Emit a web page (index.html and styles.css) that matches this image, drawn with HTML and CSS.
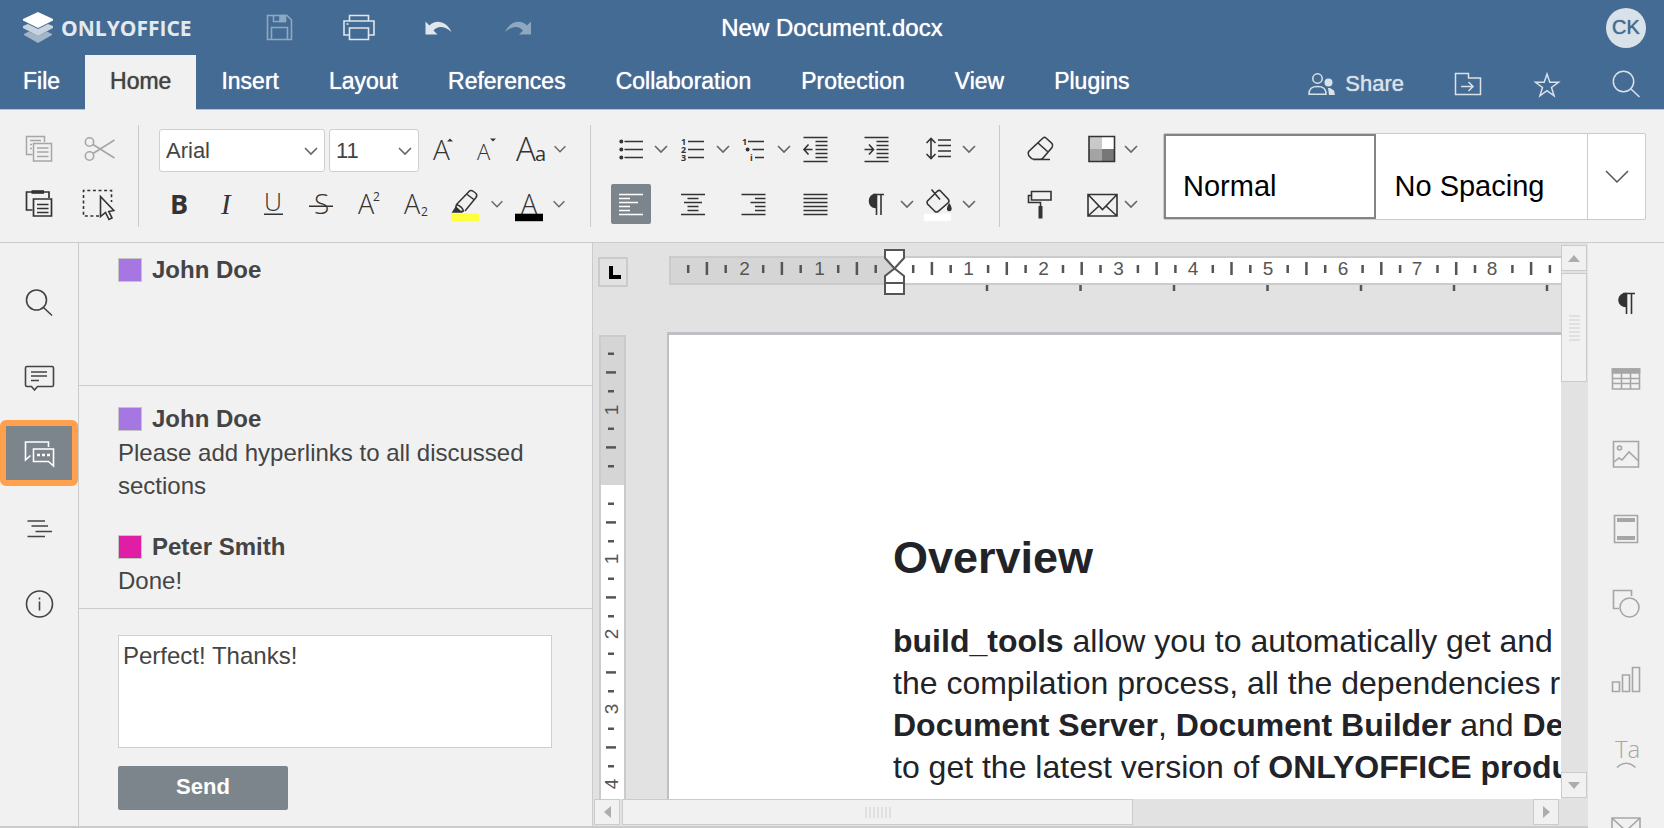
FILE: index.html
```html
<!DOCTYPE html>
<html lang="en">
<head>
<meta charset="utf-8">
<title>New Document.docx - ONLYOFFICE</title>
<link rel="stylesheet" href="styles.css">
</head>
<body>
<svg class="defs" aria-hidden="true">
  <defs>
    <symbol id="chev" viewBox="0 0 20 40"><path d="M4 17l6 6 6-6" fill="none" stroke="#666" stroke-width="1.6"/></symbol>
    <g id="cm"><path d="M18.7 18v8M56.2 18v8" /><path d="M37.4 15v13"/></g>
    <g id="vcm"><path d="M9 18.7h6M9 56.2h6"/><path d="M7 37.4h10"/></g>
  </defs>
</svg>

<header class="header">
  <div class="titlebar">
    <div class="titlebar-left">
      <a class="logo" href="#" aria-label="ONLYOFFICE">
        <svg width="30" height="31" viewBox="0 0 30 31"><path d="M1 22l5-2.500 9 4.500 9-4.500L29 22v1l-14 8L1 23z" fill="#fff" opacity=".5"/><path d="M0 14l5-2 10 5 10-5 5 2v2l-15 8-15-8z" fill="#fff" opacity=".7"/><path d="M15 0l15 7v1.500L15 16 0 8.500V7z" fill="#fff"/></svg>
        <span>ONLYOFFICE</span>
      </a>
      <div class="quick">
        <button class="btn" aria-label="Save"><svg viewBox="0 0 40 40" fill="none" stroke="#8ea8c1" stroke-width="1.600"><path d="M8.500 7.500H28l4.500 4.500v19.500h-24z"/><path d="M12.500 31V19.500h16V31M14.500 7.500v6h12v-6"/><path d="M21 7.500h5v6h-5z" fill="#8ea8c1"/></svg></button>
        <button class="btn" aria-label="Print"><svg viewBox="0 0 40 40" fill="none" stroke="#dfe6ee" stroke-width="1.600"><path d="M10.500 13V7.500h19V13M10 27H5V13h30v14h-5"/><path d="M10.500 20h19v11.500h-19z"/><path d="M7.500 16h2"/></svg></button>
        <button class="btn" aria-label="Undo"><svg viewBox="0 0 40 40"><path d="M6.500 13.500V26.500H18.500l-4-4c4-5 11-5 18 1.500-5-11-16-13-22-6.500z" fill="#dfe6ee"/></svg></button>
        <button class="btn" aria-label="Redo"><svg viewBox="0 0 40 40"><path d="M32 13.500V26.500H20l4-4c-4-5-11-5-18 1.500 5-11 16-13 22-6.500z" fill="#8ea8c1"/></svg></button>
      </div>
    </div>
    <h1 class="doc-title">New Document.docx</h1>
    <div class="titlebar-right"><button class="avatar" aria-label="User CK">CK</button></div>
  </div>
  <div class="tabbar">
    <nav class="tabs">
      <button class="tab">File</button><button class="tab tab-active">Home</button><button class="tab">Insert</button><button class="tab">Layout</button><button class="tab">References</button><button class="tab">Collaboration</button><button class="tab">Protection</button><button class="tab">View</button><button class="tab">Plugins</button>
    </nav>
    <div class="tab-actions">
      <button class="share"><svg width="27" height="24" viewBox="0 0 27 24"><circle cx="9.500" cy="6.500" r="4.700" fill="none" stroke="#d9e2ea" stroke-width="1.500"/><path d="M1 22.200c0-6 3-7.700 8.500-7.700s8.500 1.700 8.500 7.700z" fill="none" stroke="#d9e2ea" stroke-width="1.500"/><circle cx="20.500" cy="10.500" r="4" fill="#d9e2ea"/><path d="M20 16h2l4 2.500 1 4.500h-6z" fill="#d9e2ea"/></svg>Share</button>
      <button class="btn" aria-label="Open file location"><svg viewBox="0 0 40 40" fill="none" stroke="#d9e2ea" stroke-width="1.500"><path d="M7.500 11.500h13V16h12v16.500h-25z"/><path d="M13 24.500h12M20.500 20l4.500 4.500-4.500 4.500"/></svg></button>
      <button class="btn" aria-label="Mark as favorite"><svg viewBox="0 0 40 40"><path d="M20 12l2.800 8.300h8.700l-7 5.200 2.600 8.300-7.100-5.100-7.100 5.100 2.600-8.300-7-5.200h8.700z" fill="none" stroke="#d9e2ea" stroke-width="1.500"/></svg></button>
      <button class="btn" aria-label="Search"><svg viewBox="0 0 40 40" fill="none" stroke="#d9e2ea" stroke-width="1.500"><circle cx="17.500" cy="19.500" r="10.200"/><path d="M25 27l8.500 8"/></svg></button>
    </div>
  </div>
</header>

<div class="toolbar">
  <div class="group">
    <div class="row clip">
      <button class="btn" aria-label="Copy"><svg viewBox="0 0 40 40" fill="none" stroke="#a6a6a6" stroke-width="1.500"><path d="M13.500 25.500h-6v-18h18V13"/><path d="M14.500 14.500h18v17.500h-18zM18 19h11.500M18 23h11.500M18 27.500h11.500M11 11.500h11M11 15.500h2M11 19.500h2"/></svg></button>
      <button class="btn" aria-label="Cut"><svg viewBox="0 0 40 40" fill="none" stroke="#a6a6a6" stroke-width="1.600"><circle cx="10.500" cy="13" r="4.200"/><circle cx="10.500" cy="27" r="4.200"/><path d="M14 15.500L35.500 29M14 24.500L35.500 11"/></svg></button>
    </div>
    <div class="row clip">
      <button class="btn" aria-label="Paste"><svg viewBox="0 0 40 40" fill="none" stroke="#333" stroke-width="1.700"><path d="M13.500 26h-6V8H30v6"/><path d="M12.500 6.200h12.500v3.600H12.500z" fill="#333" stroke="none"/><path d="M14.500 15h18v17h-18zM18 20.500h11.500M18 24.500h11.500M18 28.500h11.500"/></svg></button>
      <button class="btn" aria-label="Select"><svg viewBox="0 0 40 40" fill="none" stroke="#333" stroke-width="1.600"><path d="M20 32H4.500V6.500h28V18" stroke-dasharray="3 2.600"/><path d="M21.500 12.500v20l5-4 3.500 7 3-1.500-3.200-6.500 5-1z" fill="#f1f1f1"/></svg></button>
    </div>
  </div>
  <div class="sep"></div>
  <div class="group font-group">
    <div class="row">
      <div class="combo combo-font"><select aria-label="Font"><option>Arial</option></select><svg width="20" height="40"><use href="#chev"/></svg></div>
      <div class="combo combo-size"><select aria-label="Font size"><option>11</option></select><svg width="20" height="40"><use href="#chev"/></svg></div>
      <button class="btn" aria-label="Increment font size"><svg class="glyph" viewBox="0 0 40 40"><text x="10" y="31" font-size="28">A</text><path d="M24 12.500l3-3 3 3z"/></svg></button>
      <button class="btn" aria-label="Decrement font size"><svg class="glyph" viewBox="0 0 40 40"><text x="10" y="31" font-size="22">A</text><path d="M23 9.500l3 3 3-3z"/></svg></button>
      <div class="split push"><button class="btn" aria-label="Change case"><svg class="glyph" viewBox="0 0 40 40"><text x="5" y="32" font-size="33">A</text><text class="mid" x="24" y="32" font-size="20">a</text></svg></button><button class="drop" aria-label="Case options"><svg viewBox="0 0 20 40"><use href="#chev"/></svg></button></div>
    </div>
    <div class="row">
      <div class="styles-row">
        <button class="btn" aria-label="Bold"><svg class="glyph" viewBox="0 0 40 40"><text class="bold" x="11" y="30" font-size="27">B</text></svg></button>
        <button class="btn" aria-label="Italic"><svg class="glyph" viewBox="0 0 40 40"><text class="ital" x="15" y="30" font-size="29">I</text></svg></button>
        <button class="btn" aria-label="Underline"><svg class="glyph" viewBox="0 0 40 40"><text x="11" y="27" font-size="25">U</text><path d="M11 29.500h19v1.500H11z"/></svg></button>
        <button class="btn" aria-label="Strikethrough"><svg class="glyph" viewBox="0 0 40 40"><text x="14" y="30" font-size="28">S</text><path d="M9 21.500h24v1.500H9z"/></svg></button>
        <button class="btn" aria-label="Superscript"><svg class="glyph" viewBox="0 0 40 40"><text x="11" y="30" font-size="27">A</text><text class="mid" x="26" y="17" font-size="12">2</text></svg></button>
        <button class="btn" aria-label="Subscript"><svg class="glyph" viewBox="0 0 40 40"><text x="10" y="30" font-size="27">A</text><text class="mid" x="27" y="32" font-size="12">2</text></svg></button>
      </div>
      <div class="split push"><button class="btn" aria-label="Highlight color"><svg viewBox="0 0 40 40" fill="none" stroke="#333" stroke-width="1.500"><path d="M8.500 20.500L21 7.500c1.500-1.500 3-1 4.500 0l2 1.500c2 1.500 1.500 3 .5 4.500L17 27M8.500 20.500c3 1 6 3 7 6.500M18.500 10l8 6M8.500 20.500l-1 4M16 27l-3 .5"/><path d="M5 28l3-4.500 5 4.500z" fill="#333"/><path d="M3 29.700h28v7.500H3z" fill="#ffff3f" stroke="none"/></svg></button><button class="drop" aria-label="Highlight options"><svg viewBox="0 0 20 40"><use href="#chev"/></svg></button></div>
      <div class="split"><button class="btn" aria-label="Font color"><svg class="glyph" viewBox="0 0 40 40"><text x="11" y="30" font-size="27">A</text><path d="M5 29.700h28v7.500H5z" fill="#000"/></svg></button><button class="drop" aria-label="Font color options"><svg viewBox="0 0 20 40"><use href="#chev"/></svg></button></div>
    </div>
  </div>
  <div class="sep"></div>
  <div class="group para-grid ink">
    <div class="split"><button class="btn" aria-label="Bullets"><svg viewBox="0 0 40 40"><circle cx="10.300" cy="12.500" r="1.200"/><circle cx="10.300" cy="20.500" r="1.200"/><circle cx="10.300" cy="28.500" r="1.200"/><path d="M13.500 12.500H32M13.500 20.500H32M13.500 28.500H32"/></svg></button><button class="drop" aria-label="Bullet options"><svg viewBox="0 0 20 40"><use href="#chev"/></svg></button></div>
    <div class="split"><button class="btn" aria-label="Numbering"><svg viewBox="0 0 40 40"><text x="8" y="15.500">1</text><text x="8" y="23.500">2</text><text x="8" y="32">3</text><path d="M15 12.500h16M15 20.500h16M15 28.500h16"/></svg></button><button class="drop" aria-label="Numbering options"><svg viewBox="0 0 20 40"><use href="#chev"/></svg></button></div>
    <div class="split"><button class="btn" aria-label="Multilevel list"><svg viewBox="0 0 40 40"><text x="8" y="15.500">1</text><circle cx="13.600" cy="20.500" r="1.200"/><text x="16" y="32">i</text><path d="M14 12.500h16M18.500 20.500H30M21 28.500h9"/></svg></button><button class="drop" aria-label="Multilevel options"><svg viewBox="0 0 20 40"><use href="#chev"/></svg></button></div>
    <button class="btn" aria-label="Decrease indent"><svg viewBox="0 0 40 40"><path d="M7.500 8.500h24M19.500 12.500h12M19.500 16.500h12M19.500 20.500h12M19.500 24.500h12M19.500 28.500h12M7.500 32.500h24M16.500 20.500H8.500M12.500 15.500l-4.500 5 4.500 5"/></svg></button>
    <button class="btn" aria-label="Increase indent"><svg viewBox="0 0 40 40"><path d="M7.500 8.500h24M19.500 12.500h12M19.500 16.500h12M19.500 20.500h12M19.500 24.500h12M19.500 28.500h12M7.500 32.500h24M7.500 20.500h8.500M12 15.500l4.500 5-4.500 5"/></svg></button>
    <div class="split"><button class="btn" aria-label="Line spacing"><svg viewBox="0 0 40 40"><path d="M19 11h13M19 16.500h13M19 22h13M19 27.500h13M12 10v19M7.500 14L12 9.500l4.500 4.500M7.500 25l4.500 4.500 4.500-4.500"/></svg></button><button class="drop" aria-label="Line spacing options"><svg viewBox="0 0 20 40"><use href="#chev"/></svg></button></div>

    <button class="btn btn-on" aria-label="Align left" aria-pressed="true"><svg viewBox="0 0 40 40"><path d="M8 10.500h24M8 14.500h11M8 18.500h19M8 22.500h11M8 26.500h11M8 30.500h24"/></svg></button>
    <button class="btn" aria-label="Align center"><svg viewBox="0 0 40 40"><path d="M8 10.500h24M14.500 14.500h11M11 18.500h18M14.500 22.500h11M14.500 26.500h11M8 30.500h24"/></svg></button>
    <button class="btn" aria-label="Align right"><svg viewBox="0 0 40 40"><path d="M7.500 10.500h24M21 14.500h10.500M16.500 18.500h15M21 22.500h10.500M21 26.500h10.500M7.500 30.500h24"/></svg></button>
    <button class="btn" aria-label="Justify"><svg viewBox="0 0 40 40"><path d="M7.500 10.500h24M7.500 14.500h24M7.500 18.500h24M7.500 22.500h24M7.500 26.500h24M7.500 30.500h24"/></svg></button>
    <div class="split"><button class="btn" aria-label="Nonprinting characters"><svg viewBox="0 0 40 40"><path d="M18.500 10.500a6 6.500 0 0 0 0 13z" fill="#333"/><path d="M16 10.500h11M19.500 10.500V31M24 10.500V31"/></svg></button><button class="drop" aria-label="Nonprinting options"><svg viewBox="0 0 20 40"><use href="#chev"/></svg></button></div>
    <div class="split"><button class="btn" aria-label="Shading"><svg viewBox="0 0 40 40"><path d="M21 6.500l8.500 9q1 1.500 0 3l-10.500 9q-1.500 1-3 0l-7.500-7.500q-1-1.500 0-3L18.500 7q1.500-1 2.500-.5zM12.500 5.500L21 15.500"/><path d="M30.300 20.500c2 3 2.300 6 0 6s-2-3 0-6z" fill="#333"/><path class="white-bar" d="M5 29.700h27v7.500H5z"/></svg></button><button class="drop" aria-label="Shading options"><svg viewBox="0 0 20 40"><use href="#chev"/></svg></button></div>
  </div>
  <div class="sep"></div>
  <div class="group misc-grid ink">
    <button class="btn" aria-label="Clear style"><svg viewBox="0 0 40 40"><path d="M23 9q1.500-1.500 3 0l6 5.500q1.500 2 0 4L23 29q-1 1.200-3 1.200h-6q-2 0-3-1.200l-2.300-2.500q-1.200-2 0-4zM18 14l9.500 8.500M13 30.500h17"/></svg></button>
    <div class="split"><button class="btn" aria-label="Change color scheme"><svg viewBox="0 0 40 40"><g stroke="none"><path d="M8 8h13v12.500H8z" fill="#c9c9c9"/><path d="M21 8h12v12.500H21z" fill="#fff"/><path d="M8 20h13v12H8z" fill="#a4a4a4"/><path d="M21 20h12v12H21z" fill="#777"/></g><path d="M8 7.500h25.500v25H8z"/></svg></button><button class="drop" aria-label="Color schemes"><svg viewBox="0 0 20 40"><use href="#chev"/></svg></button></div>
    <button class="btn" aria-label="Copy style"><svg viewBox="0 0 40 40"><path d="M11.500 7.500H31v8.500H11.500zM11.500 11.500h-3v7h12V23"/><path d="M18.500 22h4v12.500h-4z" fill="#333" stroke="none"/></svg></button>
    <div class="split"><button class="btn" aria-label="Mail merge"><svg viewBox="0 0 40 40"><path d="M7 10.500h29V32H7zM7 10.500l14.500 15L36 10.500M7 32l11-10M36 32L25 22"/></svg></button><button class="drop" aria-label="Mail merge options"><svg viewBox="0 0 20 40"><use href="#chev"/></svg></button></div>
  </div>
  <div class="gallery">
    <button class="style-card style-on">Normal</button>
    <button class="style-card">No Spacing</button>
    <button class="style-more" aria-label="More styles"><svg width="24" height="14" viewBox="0 0 24 14"><path d="M1 1l11 11L23 1" fill="none" stroke="#555" stroke-width="1.500"/></svg></button>
  </div>
</div>

<div class="workspace">
  <nav class="rail rail-left">
    <button class="rail-btn" aria-label="Search"><svg viewBox="0 0 32 32"><circle cx="13.500" cy="13" r="10"/><path d="M20.500 20.500l8.500 8"/></svg></button>
    <button class="rail-btn" aria-label="Comments"><svg viewBox="0 0 32 32"><path d="M4 4.500h25q1.500 0 1.500 1.500v17q0 1.500-1.500 1.500H14.500L11.500 28l-3-3.500H4q-1.500 0-1.500-1.500V6Q2.500 4.500 4 4.500zM8 10h16M8 14h16M8 18.500h8"/></svg></button>
    <button class="rail-btn rail-on" aria-label="Chat" aria-pressed="true"><svg viewBox="0 0 32 32"><path d="M25.500 10V5h-23v18l5-4.500M10.500 12h20v17l-5-4.500h-15z"/><path d="M14 18h3M19 18h3M24 18h3" stroke-width="2.500"/></svg></button>
    <button class="rail-btn" aria-label="Headings"><svg viewBox="0 0 32 32"><path d="M4.500 9H22M8.500 14H25M12.500 19.500H29M4.500 24.500H22"/></svg></button>
    <button class="rail-btn" aria-label="About"><svg viewBox="0 0 32 32"><circle cx="16.500" cy="17" r="13"/><path d="M16.500 14.500v9M16.500 10.500v2"/></svg></button>
  </nav>

  <aside class="chat">
    <div class="users">
      <div class="user"><span class="swatch swatch-purple"></span>John Doe</div>
    </div>
    <div class="messages">
      <div class="message">
        <div class="user"><span class="swatch swatch-purple"></span>John Doe</div>
        <p>Please add hyperlinks to all discussed sections</p>
      </div>
      <div class="message">
        <div class="user"><span class="swatch swatch-pink"></span>Peter Smith</div>
        <p>Done!</p>
      </div>
    </div>
    <form class="compose" onsubmit="return false">
      <textarea aria-label="Message">Perfect! Thanks!</textarea>
      <button class="send">Send</button>
    </form>
  </aside>

  <main class="editor">
    <div class="canvas">
      <div class="ruler-row">
        <button class="tabstop" aria-label="Tab stop"><svg width="12" height="13"><path d="M2 0v11h10" fill="none" stroke="#000" stroke-width="4"/></svg></button>
        <div class="hruler">
          <svg class="ruler" width="1400" height="50">
            <path d="M1 10h1398v27H1z" fill="#fff" stroke="#cbcbcb" stroke-width="2"/>
            <path d="M2 11h223v25H2z" fill="#d5d5d5"/>
            <g class="tick">
              <use href="#cm" x="0.500"/><use href="#cm" x="75.500"/><use href="#cm" x="150.500"/><use href="#cm" x="225.500"/><use href="#cm" x="300.400"/><use href="#cm" x="375.300"/><use href="#cm" x="450.200"/><use href="#cm" x="525.100"/><use href="#cm" x="600"/><use href="#cm" x="674.900"/><use href="#cm" x="749.800"/><use href="#cm" x="824.700"/><use href="#cm" x="899.600"/><use href="#cm" x="974.500"/>
              <path d="M318 38v6M411.500 38v6M505 38v6M598.500 38v6M692 38v6M785 38v6M878 38v6M971 38v6"/>
            </g>
            <g class="num"><text x="75.500" y="28">2</text><text x="150.500" y="28">1</text><text x="299.500" y="28">1</text><text x="374.500" y="28">2</text><text x="449.500" y="28">3</text><text x="524" y="28">4</text><text x="599" y="28">5</text><text x="674" y="28">6</text><text x="748" y="28">7</text><text x="823" y="28">8</text></g>
            <path d="M216 3h19v8l-9.500 10.500L216 11zM216 47V29l9.500-7.500L235 29v18zM216 36h19" fill="#fff" stroke="#555" stroke-width="2"/>
          </svg>
        </div>
      </div>
      <div class="page-row">
        <div class="vruler">
          <svg class="ruler" width="27" height="1400">
            <path d="M1 1h25v1398H1z" fill="#fff" stroke="#cbcbcb" stroke-width="2"/>
            <path d="M2 2h23v148H2z" fill="#d5d5d5"/>
            <g class="tick"><use href="#vcm" y="0"/><use href="#vcm" y="75"/><use href="#vcm" y="150"/><use href="#vcm" y="225"/><use href="#vcm" y="300"/><use href="#vcm" y="375"/><use href="#vcm" y="450"/></g>
            <g class="num"><text transform="translate(19 75) rotate(-90)">1</text><text transform="translate(19 224) rotate(-90)">1</text><text transform="translate(19 299) rotate(-90)">2</text><text transform="translate(19 374) rotate(-90)">3</text><text transform="translate(19 449) rotate(-90)">4</text></g>
          </svg>
        </div>
        <article class="page">
          <h2>Overview</h2>
          <p><b>build_tools</b> allow you to automatically get and install all the components necessary for<br>the compilation process, all the dependencies required for the <b>ONLYOFFICE</b><br><b>Document Server</b>, <b>Document Builder</b> and <b>Desktop Editors</b> correct work,<br>to get the latest version of <b>ONLYOFFICE products</b> source code and build all the<br>components.</p>
        </article>
      </div>
    </div>
    <div class="vscroll">
      <button class="sb" aria-label="Scroll up"><svg width="12" height="7"><path d="M0 7l6-7 6 7z"/></svg></button>
      <div class="vthumb"><svg width="11" height="26"><path d="M0 1h11M0 5h11M0 9h11M0 13h11M0 17h11M0 21h11M0 25h11"/></svg></div>
      <button class="sb sb-end" aria-label="Scroll down"><svg width="12" height="7"><path d="M0 0l6 7 6-7z"/></svg></button>
    </div>
    <div class="hscroll">
      <button class="sb" aria-label="Scroll left"><svg width="7" height="12"><path d="M7 0L0 6l7 6z"/></svg></button>
      <div class="hthumb"><svg width="26" height="11"><path d="M1 0v11M5 0v11M9 0v11M13 0v11M17 0v11M21 0v11M25 0v11"/></svg></div>
      <button class="sb sb-end" aria-label="Scroll right"><svg width="7" height="12"><path d="M0 0l7 6-7 6z"/></svg></button>
    </div>
  </main>

  <nav class="rail rail-right">
    <button class="rail-btn rail-dark" aria-label="Paragraph settings"><svg viewBox="0 0 32 32"><path d="M16 5.500a7 6.500 0 0 0 0 13z" fill="#333"/><path d="M13 5.500h12M16.500 5.500v20.500M21.500 5.500v20.500"/></svg></button>
    <button class="rail-btn" aria-label="Table settings"><svg viewBox="0 0 32 32"><path d="M2.500 6h27v20h-27zM2.500 15.500h27M2.500 20.500h27M11.500 9v17M20.500 9v17"/><path d="M2.500 6h27v4h-27z" fill="#a6a6a6"/></svg></button>
    <button class="rail-btn" aria-label="Image settings"><svg viewBox="0 0 32 32"><path d="M3.500 3.500h25v25.500h-25zM4 24l5-4 3 2 7-8 9.500 9"/><circle cx="9.500" cy="10" r="2"/></svg></button>
    <button class="rail-btn" aria-label="Header and footer settings"><svg viewBox="0 0 32 32"><path d="M4.500 2.500h23v27h-23z"/><path d="M7 5h18v4H7zM7 23h18v4H7z" fill="#a6a6a6" stroke="none"/></svg></button>
    <button class="rail-btn" aria-label="Shape settings"><svg viewBox="0 0 32 32"><path d="M21.500 8V2.500h-18v18H9"/><circle cx="19.500" cy="19.500" r="9.500"/></svg></button>
    <button class="rail-btn" aria-label="Chart settings"><svg viewBox="0 0 32 32"><path d="M2.500 19h7v9.500h-7zM12.500 12h7v16.500h-7zM22.500 4.500h7v24h-7z"/></svg></button>
    <button class="rail-btn" aria-label="Text art settings"><svg viewBox="0 0 32 32"><text x="5" y="20">Ta</text><path d="M7 29.500q9-8.500 18.500 0"/></svg></button>
    <button class="rail-btn" aria-label="Mail merge settings"><svg viewBox="0 0 32 32"><path d="M2 5h28v21H2zM2 5l14 13L30 5"/></svg></button>
  </nav>
</div>
</body>
</html>
```
FILE: styles.css
```css
* { box-sizing: border-box; }
html, body { height: 100%; }
body {
  margin: 0;
  display: flex;
  flex-direction: column;
  overflow: hidden;
  background: #f1f1f1;
  color: #444;
  font-family: "Liberation Sans", Arial, sans-serif;
  font-size: 24px;
}
button, select, textarea { font: inherit; color: inherit; }
button { margin: 0; padding: 0; border: 0; background: none; }
svg { display: block; flex: none; }
.defs { position: absolute; width: 0; height: 0; }

.btn { width: 40px; height: 40px; flex: none; border-radius: 2px; }
.btn svg { width: 40px; height: 40px; }
.drop { width: 20px; height: 40px; flex: none; }
.drop svg { width: 100%; height: 40px; }
.split { display: flex; }

/* header */
.header { flex: none; background: #446b93; color: #fff; }
.titlebar { display: grid; grid-template-columns: 1fr auto 1fr; align-items: center; height: 55px; }
.titlebar-left { display: flex; align-items: center; padding-left: 23px; }
.logo {
  display: flex;
  align-items: center;
  gap: 8px;
  width: 236px;
  color: #e3e9ef;
  text-decoration: none;
  font: 700 21px "Open Sans", "Noto Sans", sans-serif;
}
.quick { display: flex; gap: 40px; }
.doc-title { margin: 0; font-size: 24px; font-weight: 400; text-shadow: 0 0 1px currentColor; }
.titlebar-right { display: flex; justify-content: flex-end; padding-right: 18px; }
.avatar {
  width: 40px;
  height: 40px;
  border-radius: 50%;
  background: #d9e1e9;
  color: #446b93;
  font-size: 20px;
  text-shadow: 0 0 1px currentColor;
}
.tabbar {
  display: flex;
  justify-content: space-between;
  height: 55px;
  box-shadow: inset 0 -1px #adc2d6;
}
.tabs { display: flex; }
.tab { padding: 0 25px 2px; font-size: 23px; text-shadow: 0 0 1px currentColor; }
.tab:first-child { padding-left: 23px; }
.tab-active { background: #f1f1f1; color: #444; }
.tab-actions { display: flex; align-items: center; gap: 39px; padding: 0 18px 2px 0; }
.share {
  display: flex;
  align-items: center;
  gap: 10px;
  margin-right: 5px;
  padding-top: 4px;
  color: #d9e2ea;
  font-size: 22px;
  text-shadow: 0 0 1px currentColor;
}

/* toolbar */
.toolbar {
  flex: none;
  display: flex;
  height: 133px;
  padding: 19px 18px 0 19px;
  border-bottom: 1px solid #cbcbcb;
}
.group { flex: none; display: flex; flex-direction: column; gap: 15px; }
.row { display: flex; gap: 4px; height: 40px; }
.clip { gap: 20px; }
.sep { flex: none; width: 1px; height: 102px; margin: -4px 20px 0 19px; background: #cbcbcb; }
.font-group { width: 412px; padding-right: 3px; }
.font-group .drop { width: 18px; }
.push { margin-left: auto; }
.styles-row { display: flex; gap: 7px; }
.combo { position: relative; flex: none; }
.combo-font { width: 166px; }
.combo-size { width: 90px; }
.combo select {
  display: block;
  width: 100%;
  height: 43px;
  padding: 0 6px;
  appearance: none;
  border: 1px solid #cfcfcf;
  border-radius: 3px;
  background: #fff;
  font-size: 22px;
}
.combo svg { position: absolute; top: 2px; right: 4px; pointer-events: none; }
.glyph { overflow: visible; fill: #333; font-family: "Open Sans", "Noto Sans", sans-serif; font-weight: 300; }
.glyph .bold { font-weight: 700; }
.glyph .mid { font-weight: 500; }
.glyph .ital { font-family: "Liberation Serif", serif; font-style: italic; }
.ink .btn svg { fill: none; stroke: #333; stroke-width: 1.6; }
.ink circle { fill: #333; }
.ink text { fill: #333; stroke: none; font: 700 9px "Open Sans", sans-serif; }
.ink .white-bar { fill: #fff; stroke: none; }
.ink .btn-on { background: #7d858c; }
.ink .btn-on svg { stroke: #fff; }
.para-grid { display: grid; grid-template-columns: 62px 61px 62px 61px 62px 61px; grid-template-rows: 40px 40px; gap: 15px 0; }
.misc-grid { display: grid; grid-template-columns: 61px 60px; grid-template-rows: 40px 40px; gap: 15px 0; }
.gallery {
  flex: 1;
  display: flex;
  height: 87px;
  margin: 4px 0 0 22px;
  border: 1px solid #cbcbcb;
  border-radius: 2px;
  background: #fff;
}
.style-card { flex: 1; padding: 19px 17px 0; border: 2px solid transparent; text-align: left; color: #000; font-size: 29px; }
.style-on { border-color: #848484; }
.style-more { display: flex; align-items: center; justify-content: center; width: 58px; border-left: 1px solid #cbcbcb; }

/* workspace */
.workspace { flex: 1; display: flex; min-height: 0; }
.rail { flex: none; display: flex; flex-direction: column; gap: 9px; padding-top: 27px; overflow: hidden; }
.rail-left { width: 78px; border-bottom: 2px solid #cbcbcb; }
.rail-right { width: 76px; padding-top: 28px; }
.rail-btn { display: flex; flex: none; align-items: center; justify-content: center; width: 100%; height: 66px; }
.rail-btn svg { width: 32px; height: 32px; fill: none; stroke: #444; stroke-width: 1.6; }
.rail-on { border: 6px solid #ffa04d; border-radius: 6px; background: #7d858c; }
.rail-on svg { stroke: #fff; }
.rail-right .rail-btn svg { stroke: #a6a6a6; }
.rail-right .rail-dark svg { stroke: #333; }
.rail-right text { fill: #a6a6a6; stroke: none; font: 300 24px "Open Sans", sans-serif; }

/* chat */
.chat {
  flex: none;
  display: flex;
  flex-direction: column;
  width: 515px;
  border: solid #cbcbcb;
  border-width: 0 1px 2px;
  line-height: 33px;
}
.users { height: 143px; padding: 10px 39px; border-bottom: 1px solid #cbcbcb; }
.messages { display: flex; flex-direction: column; gap: 28px; padding: 16px 39px 11px; border-bottom: 1px solid #cbcbcb; }
.user { display: flex; align-items: center; gap: 10px; font-weight: 700; }
.swatch { width: 24px; height: 24px; border: 1px solid #c4c4c4; }
.swatch-purple { background: #a677e3; }
.swatch-pink { background: #e01da5; }
.message p { margin: 1px 0 0; }
.compose { display: flex; flex-direction: column; align-items: flex-start; gap: 18px; padding: 26px 40px 0 39px; }
.compose textarea {
  width: 100%;
  height: 113px;
  padding: 3px 4px;
  border: 1px solid #cfcfcf;
  border-radius: 0;
  background: #fff;
  resize: none;
}
.send { width: 170px; height: 44px; padding-bottom: 3px; border-radius: 2px; background: #7d858c; color: #fff; font-size: 22px; font-weight: 700; }

/* editor */
.editor {
  flex: 1;
  min-width: 0;
  display: grid;
  grid-template-columns: minmax(0, 1fr) 27px;
  grid-template-rows: minmax(0, 1fr) 27px;
  border-bottom: 2px solid #cbcbcb;
  background: #e2e2e2;
}
.canvas { display: flex; flex-direction: column; min-height: 0; overflow: hidden; }
.ruler-row { display: flex; flex: none; padding: 4px 0 0 5px; }
.tabstop {
  display: flex;
  flex: none;
  align-items: center;
  justify-content: center;
  width: 30px;
  height: 30px;
  margin: 10px 41px 0 0;
  padding-left: 3px;
  border: 2px solid #cbcbcb;
}
.hruler { flex: 1; min-width: 0; overflow: hidden; }
.tick { stroke: #555; stroke-width: 2.5; }
.num { fill: #555; font-size: 19px; text-anchor: middle; }
.page-row { display: flex; flex: 1; min-height: 0; padding-left: 6px; }
.vruler { flex: none; margin: 38px 41px 0 0; overflow: hidden; }
.page {
  flex: 1;
  min-width: 0;
  margin-top: 35px;
  padding: 197px 0 0 224px;
  border: solid #bfc0c4;
  border-width: 3px 0 0 2px;
  background: #fff;
  color: #212328;
  overflow: hidden;
  white-space: nowrap;
}
.page h2 { margin: 0 0 36px; font-size: 45px; line-height: 52px; }
.page p { margin: 0; font-size: 32px; line-height: 42px; }

.sb { display: flex; flex: none; align-items: center; justify-content: center; width: 26px; height: 26px; border: 1px solid #cbcbcb; background: #f1f1f1; }
.sb svg { fill: #adadad; }
.vscroll { display: flex; flex-direction: column; gap: 2px; padding: 2px 0 1px; }
.vthumb, .hthumb { display: flex; align-items: center; justify-content: center; border: 1px solid #cbcbcb; background: #f1f1f1; }
.vthumb svg, .hthumb svg { stroke: #cfcfcf; stroke-width: 1; }
.vthumb { width: 26px; height: 109px; }
.vscroll .sb-end { margin-top: auto; }
.hscroll { display: flex; gap: 2px; padding: 0 2px 0 1px; }
.hthumb { width: 53%; height: 26px; }
.hscroll .sb-end { margin-left: auto; }
```
